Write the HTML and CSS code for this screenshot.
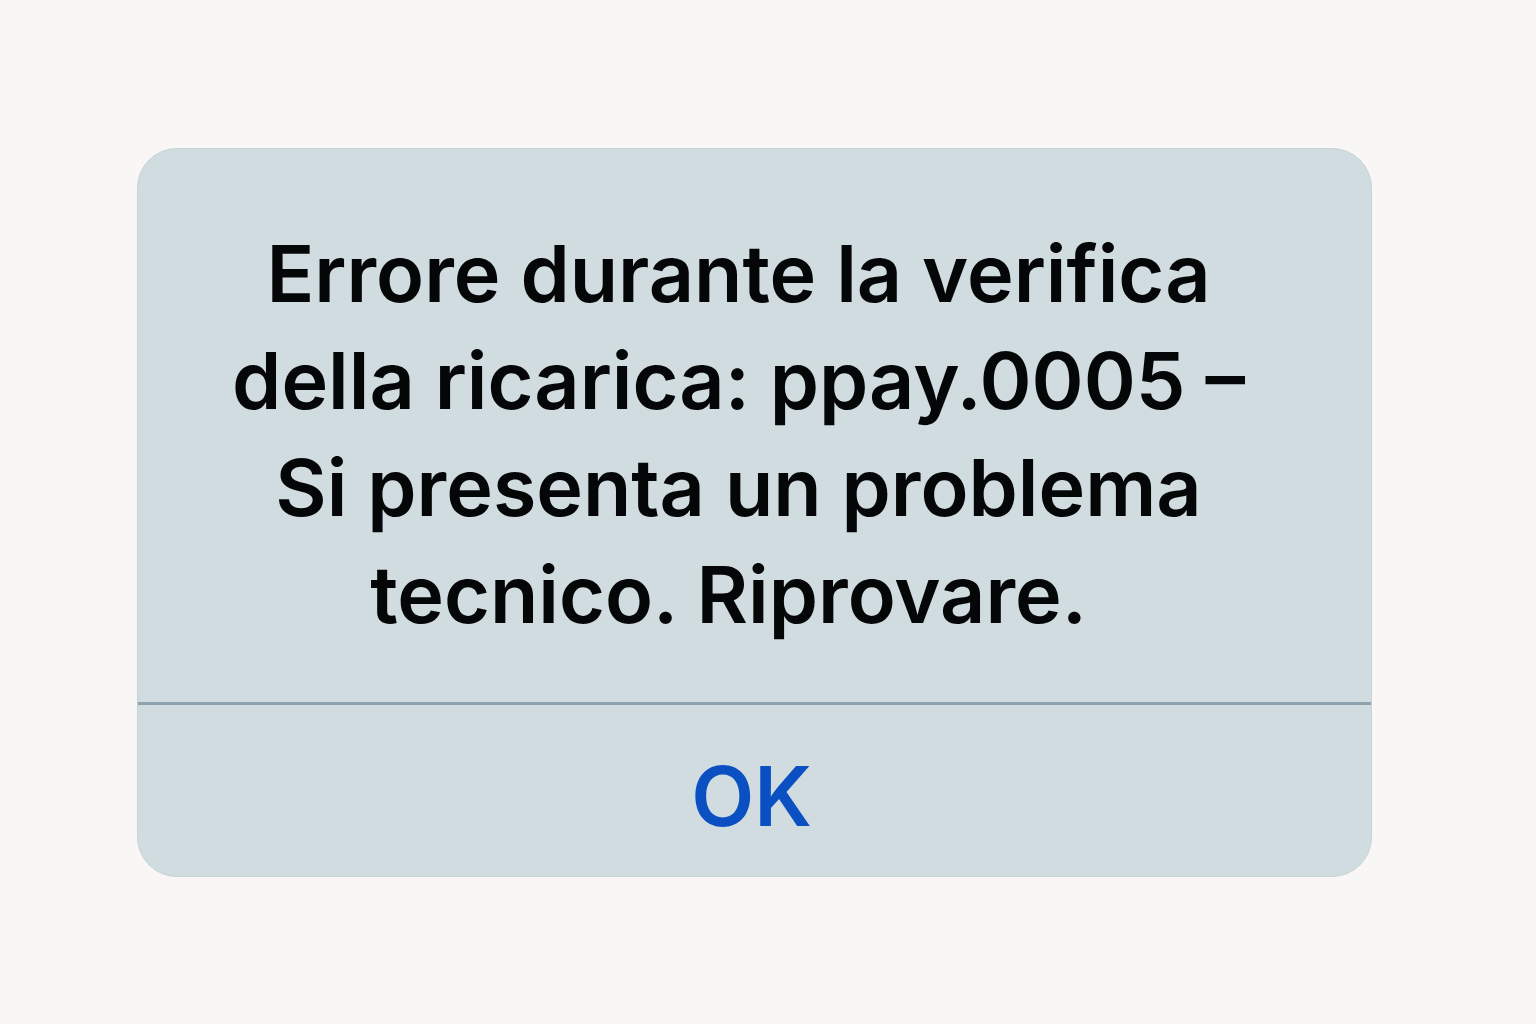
FILE: index.html
```html
<!DOCTYPE html>
<html lang="it">
<head>
<meta charset="utf-8">
<title>Errore</title>
<link rel="stylesheet" href="styles.css">
</head>
<body>
<div class="dialog">
  <div class="message">
    <p class="text">Errore durante la verifica<br>della ricarica: ppay.0005 –<br>Si presenta un problema<br>tecnico. Riprovare.&nbsp;</p>
  </div>
  <div class="divider"></div>
  <div class="actions">
    <span class="ok">OK</span>
  </div>
</div>
</body>
</html>
```
FILE: styles.css
```css
html, body {
  margin: 0;
  padding: 0;
}
body {
  width: 1536px;
  height: 1024px;
  background: #f8f7f5;
  display: flex;
  justify-content: flex-start;
  align-items: flex-start;
  font-family: "Inter", "Noto Sans", "Liberation Sans", sans-serif;
}
.dialog {
  margin-top: 148px;
  margin-left: 137px;
  width: 1233px;
  height: 727px;
  background: #d0dcdf;
  border: 1px solid #c5d2d6;
  border-radius: 40px;
  display: flex;
  flex-direction: column;
}
.message {
  flex: 1;
  display: flex;
  align-items: flex-start;
  justify-content: center;
  padding: 71px 32px 0 0;
}
.text {
  margin: 0;
  font-size: 79px;
  font-weight: 600;
  line-height: 107px;
  text-align: center;
  color: #050607;
}
.divider {
  height: 3px;
  background: #8ea3ad;
}
.actions {
  height: 171px;
  display: flex;
  align-items: center;
  justify-content: center;
}
.ok {
  font-size: 82px;
  font-weight: 600;
  color: #0b50c2;
  padding-top: 12px;
  padding-right: 6px;
}
```
